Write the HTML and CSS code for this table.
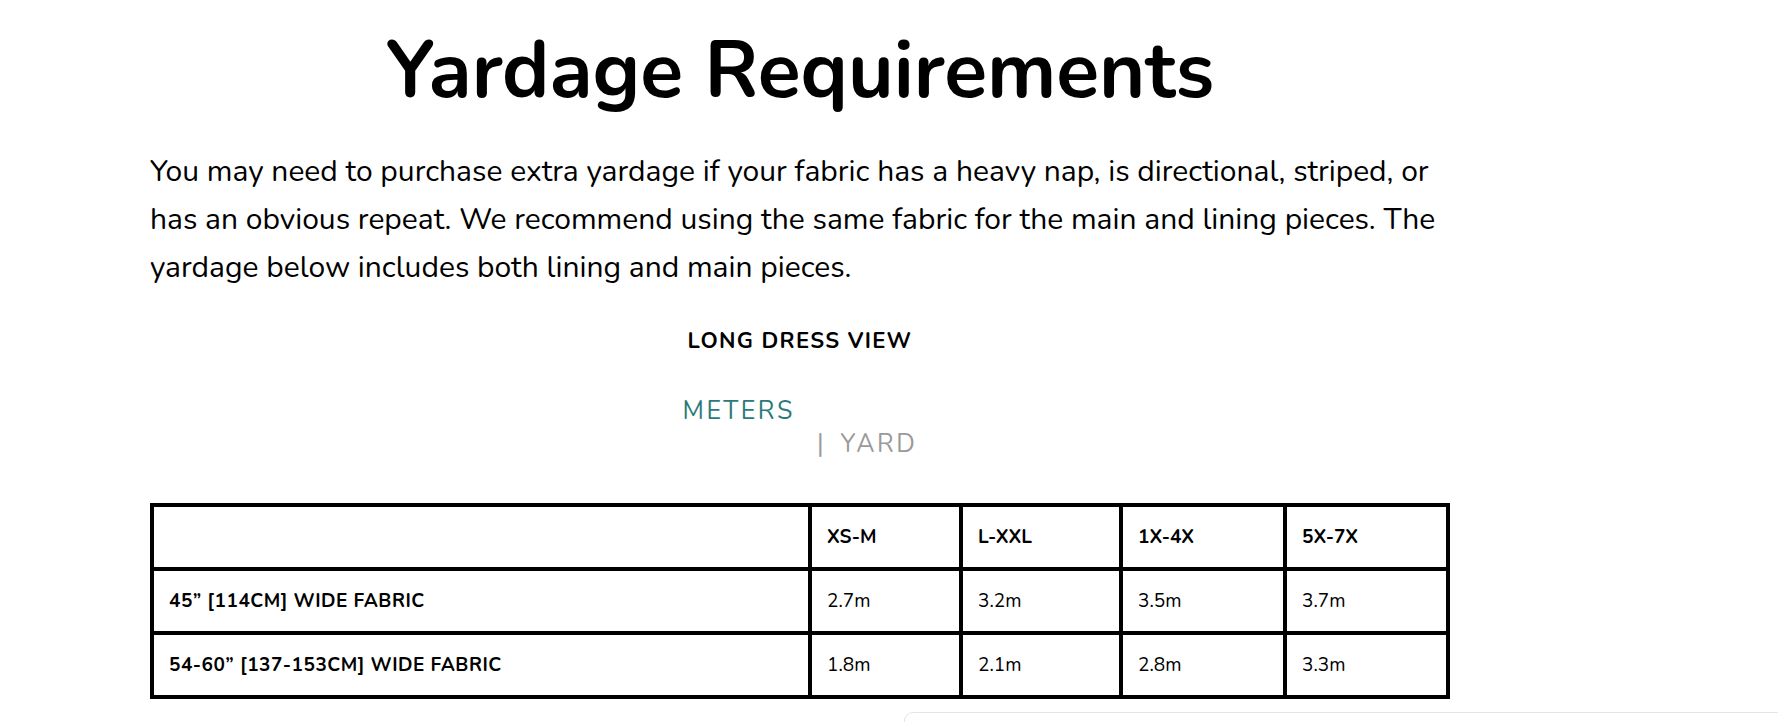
FILE: index.html
```html
<!DOCTYPE html>
<html lang="en">
<head>
<meta charset="utf-8">
<title>Yardage Requirements</title>
<link rel="stylesheet" href="styles.css">
</head>
<body>
<main class="page">
  <h1 class="title">Yardage Requirements</h1>
  <p class="intro">You may need to purchase extra yardage if your fabric has a heavy nap, is directional, striped, or has an obvious repeat. We recommend using the same fabric for the main and lining pieces. The yardage below includes both lining and main pieces.</p>
  <h2 class="view-title">LONG DRESS VIEW</h2>
  <div class="units">
    <span class="unit unit-active">METERS</span>
    <span class="unit unit-yard"><span class="sep">|</span>YARD</span>
  </div>
  <table class="yardage">
    <colgroup>
      <col class="c-label">
      <col class="c-size1">
      <col class="c-size2">
      <col class="c-size3">
      <col class="c-size4">
    </colgroup>
    <thead>
      <tr>
        <th></th>
        <th>XS-M</th>
        <th>L-XXL</th>
        <th>1X-4X</th>
        <th>5X-7X</th>
      </tr>
    </thead>
    <tbody>
      <tr>
        <th class="row-label">45” [114CM] WIDE FABRIC</th>
        <td>2.7m</td>
        <td>3.2m</td>
        <td>3.5m</td>
        <td>3.7m</td>
      </tr>
      <tr>
        <th class="row-label">54-60” [137-153CM] WIDE FABRIC</th>
        <td>1.8m</td>
        <td>2.1m</td>
        <td>2.8m</td>
        <td>3.3m</td>
      </tr>
    </tbody>
  </table>
</main>
<div class="widget"></div>
</body>
</html>
```

FILE: styles.css
```css
html, body {
  margin: 0;
  padding: 0;
  background: #fff;
  overflow: hidden;
}

body {
  font-family: "Nunito", "Lato", "Open Sans", sans-serif;
  color: #000;
}

.page {
  width: 1300px;
  margin-left: 150px;
  display: flex;
  flex-direction: column;
}

.title {
  margin: 23px 0 0;
  font-size: 79px;
  line-height: 96px;
  font-weight: 700;
  text-align: center;
}

.intro {
  margin: 29px 0 0;
  font-size: 30px;
  line-height: 48px;
  font-weight: 400;
}

.view-title {
  margin: 34px 0 0;
  font-size: 22px;
  line-height: 30px;
  font-weight: 700;
  letter-spacing: 1.3px;
  text-align: center;
}

.units {
  margin-top: 40px;
  display: flex;
  justify-content: center;
  align-items: flex-start;
  gap: 22px;
  font-size: 25px;
  line-height: 30px;
  letter-spacing: 2.5px;
}

.unit-active {
  color: #2a7a77;
}

.unit-yard {
  color: #9a9a9a;
  padding-top: 33px;
}

.sep {
  margin-right: 17px;
  letter-spacing: 0;
}

.yardage {
  margin-top: 44px;
  width: 1300px;
  border-collapse: collapse;
  table-layout: fixed;
  border: 4px solid #000;
}

.c-label { width: 658px; }
.c-size1 { width: 151px; }
.c-size2 { width: 160px; }
.c-size3 { width: 164px; }
.c-size4 { width: 163px; }

.yardage th,
.yardage td {
  border: 4px solid #000;
  padding: 18px 15px;
  font-size: 19px;
  line-height: 24px;
  text-align: left;
  vertical-align: middle;
}

.yardage th {
  font-weight: 700;
}

.yardage .row-label {
  letter-spacing: 0.5px;
}

.yardage td {
  font-weight: 400;
}

.widget {
  position: absolute;
  left: 904px;
  right: 0;
  top: 712px;
  bottom: 0;
  border: 1px solid #e2e6e0;
  border-right: 0;
  border-bottom: 0;
  border-top-left-radius: 9px;
  background: #fff;
}
```
